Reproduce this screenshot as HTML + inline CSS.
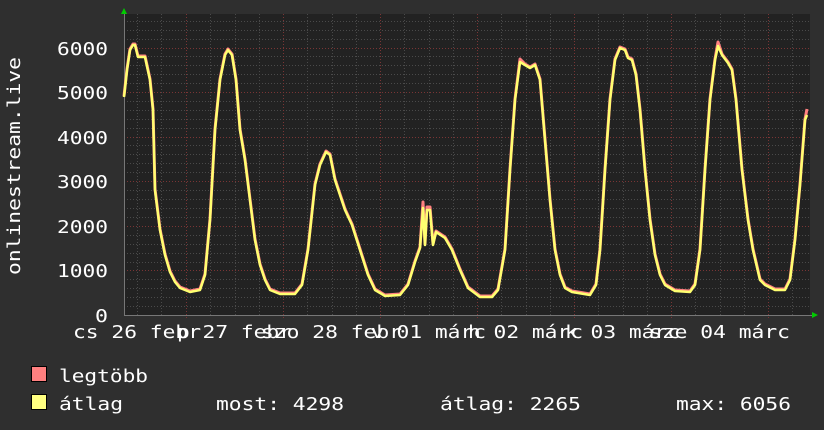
<!DOCTYPE html>
<html><head><meta charset="utf-8"><style>
body{margin:0;background:#2f2f2f;width:824px;height:430px;overflow:hidden}
svg{display:block}
text{font-family:"DejaVu Sans Mono","Liberation Mono",monospace;fill:#fff}
</style></head><body>
<svg width="824" height="430" viewBox="0 0 824 430">
<rect x="0" y="0" width="824" height="430" fill="#2f2f2f"/>
<rect x="124" y="14" width="686" height="301" fill="#222"/>
<g stroke="#4a4a4a" stroke-dasharray="1,2" fill="none">
<path d="M124 306.5H810M124 297.5H810M124 288.5H810M124 279.5H810M124 262.5H810M124 253.5H810M124 244.5H810M124 235.5H810M124 217.5H810M124 208.5H810M124 199.5H810M124 190.5H810M124 172.5H810M124 163.5H810M124 154.5H810M124 145.5H810M124 128.5H810M124 119.5H810M124 110.5H810M124 101.5H810M124 83.5H810M124 74.5H810M124 65.5H810M124 56.5H810M124 39.5H810M124 30.5H810M124 21.5H810"/>
<path d="M137.5 14V315M161.5 14V315M210.5 14V315M235.5 14V315M259.5 14V315M307.5 14V315M332.5 14V315M356.5 14V315M404.5 14V315M429.5 14V315M453.5 14V315M501.5 14V315M526.5 14V315M550.5 14V315M598.5 14V315M623.5 14V315M647.5 14V315M695.5 14V315M720.5 14V315M744.5 14V315M792.5 14V315"/>
</g>
<g stroke="#7a3535" stroke-dasharray="1,2" fill="none">
<path d="M124 270.5H810M124 226.5H810M124 181.5H810M124 137.5H810M124 92.5H810M124 48.5H810"/>
<path d="M186.5 14V318M283.5 14V318M380.5 14V318M477.5 14V318M574.5 14V318M671.5 14V318M768.5 14V318"/>
</g>
<line x1="124" y1="315.5" x2="812" y2="315.5" stroke="#777"/>
<line x1="124.5" y1="12" x2="124.5" y2="315" stroke="#777"/>
<polygon points="121,14 127,14 124,8" fill="#0c0"/>
<polygon points="812,312 812,318 818,315" fill="#0c0"/>
<g fill="none" stroke-linejoin="round">
<polyline stroke="#ff8080" stroke-width="3" transform="translate(0,-1)" points="124,97 127,70 130,50 133,45 135,45 138,57 145,57 150,80 153,110 155,190 160,230 165,255 170,272 175,282 180,288 190,292 200,290 205,275 210,220 215,130 220,80 225,55 228,50 232,55 236,80 240,130 245,160 250,200 255,240 260,265 265,280 270,290 280,294 295,294 302,285 308,250 315,185 320,165 326,152 330,155 335,180 340,195 345,210 352,225 360,250 368,275 375,290 385,296 400,295 408,285 415,262 420,248 423,203 425,245 427,208 430,208 433,245 436,232 445,238 452,250 460,270 468,288 480,297 492,297 498,290 505,250 510,170 515,100 520,60 525,65 530,68 535,65 540,80 545,140 550,200 555,250 560,275 565,288 572,292 590,295 596,285 600,250 605,170 610,100 615,60 620,48 625,50 628,58 632,60 636,75 640,110 645,170 650,220 655,255 660,275 665,285 675,291 690,292 695,285 700,250 705,170 710,100 715,60 718,43 722,55 728,63 732,70 736,100 742,170 748,220 753,250 760,280 765,285 775,290 785,290 790,280 795,240 800,185 805,120 807,110"/>
<polyline stroke="#ffff70" stroke-width="2.5" points="124,97 127,70 130,50 133,45 135,45 138,57 145,57 150,80 153,110 155,190 160,230 165,255 170,272 175,282 180,288 190,292 200,290 205,275 210,220 215,130 220,80 225,55 228,50 232,55 236,80 240,130 245,160 250,200 255,240 260,265 265,280 270,290 280,294 295,294 302,285 308,250 315,185 320,165 326,152 330,155 335,180 340,195 345,210 352,225 360,250 368,275 375,290 385,296 400,295 408,285 415,262 420,248 423,208 425,245 427,210 430,210 433,245 436,232 445,238 452,250 460,270 468,288 480,297 492,297 498,290 505,250 510,170 515,100 520,62 525,65 530,68 535,65 540,80 545,140 550,200 555,250 560,275 565,288 572,292 590,295 596,285 600,250 605,170 610,100 615,60 620,48 625,50 628,58 632,60 636,75 640,110 645,170 650,220 655,255 660,275 665,285 675,291 690,292 695,285 700,250 705,170 710,100 715,60 718,46 722,55 728,63 732,70 736,100 742,170 748,220 753,250 760,280 765,285 775,290 785,290 790,280 795,240 800,185 805,120 807,115"/>
</g>
<g font-size="18" text-anchor="end">
<text x="108" y="55" textLength="51" lengthAdjust="spacingAndGlyphs">6000</text>
<text x="108" y="99" textLength="51" lengthAdjust="spacingAndGlyphs">5000</text>
<text x="108" y="144" textLength="51" lengthAdjust="spacingAndGlyphs">4000</text>
<text x="108" y="188" textLength="51" lengthAdjust="spacingAndGlyphs">3000</text>
<text x="108" y="233" textLength="51" lengthAdjust="spacingAndGlyphs">2000</text>
<text x="108" y="277" textLength="51" lengthAdjust="spacingAndGlyphs">1000</text>
<text x="108" y="322" textLength="13" lengthAdjust="spacingAndGlyphs">0</text>
</g>
<text font-size="18" transform="translate(20,275) rotate(-90)" textLength="218" lengthAdjust="spacingAndGlyphs">onlinestream.live</text>
<g font-size="18">
<text x="73" y="338" textLength="128" lengthAdjust="spacingAndGlyphs">cs 26 febr</text>
<text x="177" y="338" textLength="115" lengthAdjust="spacingAndGlyphs">p 27 febr</text>
<text x="261" y="338" textLength="141" lengthAdjust="spacingAndGlyphs">szo 28 febr</text>
<text x="371" y="338" textLength="115" lengthAdjust="spacingAndGlyphs">v 01 márc</text>
<text x="468" y="338" textLength="115" lengthAdjust="spacingAndGlyphs">h 02 márc</text>
<text x="565" y="338" textLength="115" lengthAdjust="spacingAndGlyphs">k 03 márc</text>
<text x="649" y="338" textLength="141" lengthAdjust="spacingAndGlyphs">sze 04 márc</text>
</g>
<rect x="31.5" y="366.5" width="15" height="15" fill="#ff8080" stroke="#000"/>
<rect x="31.5" y="394.5" width="15" height="15" fill="#ffff80" stroke="#000"/>
<g font-size="18">
<text x="59" y="382" textLength="89" lengthAdjust="spacingAndGlyphs">legtöbb</text>
<text x="59" y="410" textLength="64" lengthAdjust="spacingAndGlyphs">átlag</text>
<text x="216" y="410" textLength="128" lengthAdjust="spacingAndGlyphs">most: 4298</text>
<text x="440" y="410" textLength="141" lengthAdjust="spacingAndGlyphs">átlag: 2265</text>
<text x="676" y="410" textLength="115" lengthAdjust="spacingAndGlyphs">max: 6056</text>
</g>
</svg>
</body></html>
